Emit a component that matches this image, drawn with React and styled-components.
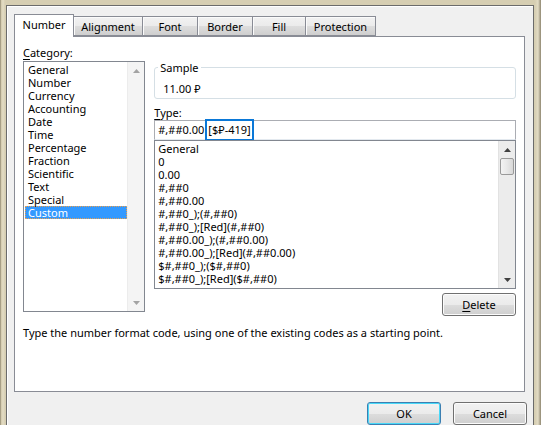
import React from "react";
import styled, { createGlobalStyle } from "styled-components";

const GlobalStyle = createGlobalStyle`
  html, body {
    margin: 0;
    padding: 0;
  }
  body {
    font-family: "Segoe UI", "Noto Sans", sans-serif;
    font-size: 11px;
    color: #000;
  }
`;

const Frame = styled.div`
  width: 541px;
  height: 425px;
  box-sizing: border-box;
  overflow: hidden;
  display: flex;
  padding: 5px 7px 0 6px;
  background: linear-gradient(
    90deg,
    #7d7560 0,
    #d2c9ab 1px,
    #e4ddc6 3px,
    #d6ceb2 5px,
    #d6ceb2 calc(100% - 6px),
    #e2dbc4 calc(100% - 3px),
    #8f8771 100%
  );
`;

const Dialog = styled.div`
  flex: 1;
  display: flex;
  flex-direction: column;
  background: #f0f0f0;
  border: 1px solid #6b6b6b;
  border-bottom: none;
  box-shadow: inset 1px 1px 0 #ffffff;
  padding: 8px 8px 0 7px;
`;

const TabStrip = styled.div`
  display: flex;
  align-items: flex-end;
  height: 22px;
`;

const Tab = styled.div`
  box-sizing: border-box;
  width: ${(p) => p.$w}px;
  height: ${(p) => (p.$active ? 23 : 20)}px;
  margin-bottom: ${(p) => (p.$active ? -1 : 0)}px;
  position: relative;
  z-index: ${(p) => (p.$active ? 2 : 1)};
  display: flex;
  align-items: center;
  justify-content: center;
  padding-bottom: ${(p) => (p.$active ? 3 : 0)}px;
  border: 1px solid #898c95;
  border-bottom: ${(p) => (p.$active ? "none" : "1px solid #898c95")};
  border-left: ${(p) => (p.$first || p.$active ? "1px solid #898c95" : "none")};
  background: ${(p) =>
    p.$active
      ? "#ffffff"
      : "linear-gradient(180deg, #f2f2f2 0%, #ebebeb 50%, #dddddd 51%, #cfcfcf 100%)"};
  box-shadow: ${(p) => (p.$active ? "none" : "inset 1px 1px 0 #fbfbfb")};
`;

const Panel = styled.div`
  box-sizing: border-box;
  width: 511px;
  height: 365px;
  background: #ffffff;
  border: 1px solid #898c95;
  padding: 8px 8px 0 8px;
  display: flex;
  flex-direction: column;
`;

const Columns = styled.div`
  display: flex;
  gap: 9px;
  align-items: flex-start;
`;

const LeftCol = styled.div`
  width: 123px;
  display: flex;
  flex-direction: column;
`;

const RightCol = styled.div`
  width: 364px;
  display: flex;
  flex-direction: column;
  margin-top: 15px;
`;

const Label = styled.div`
  line-height: 15px;
  height: 15px;
  margin-bottom: ${(p) => p.$mb || 0}px;
  margin-top: ${(p) => p.$mt || 0}px;
  u {
    text-decoration: underline;
    text-underline-offset: 2px;
  }
`;

const ListBox = styled.div`
  box-sizing: border-box;
  height: ${(p) => p.$h}px;
  flex-shrink: 0;
  border: 1px solid #828790;
  background: #ffffff;
  display: flex;
  overflow: hidden;
`;

const Items = styled.div`
  flex: 1;
  padding-top: ${(p) => p.$pt}px;
  padding-left: 1px;
  overflow: hidden;
`;

const Item = styled.div`
  height: 13px;
  line-height: 13px;
  padding-left: ${(p) => p.$pl}px;
  white-space: nowrap;
  box-sizing: border-box;
  background: ${(p) => (p.$selected ? "#3399ff" : "transparent")};
  color: ${(p) => (p.$selected ? "#ffffff" : "#000")};
  outline: ${(p) => (p.$selected ? "1px dotted #e8a050" : "none")};
  outline-offset: -1px;
`;

const ScrollBar = styled.div`
  width: 17px;
  display: flex;
  flex-direction: column;
  background: ${(p) => (p.$disabled ? "#f4f4f4" : "#ececec")};
  border-left: 1px solid ${(p) => (p.$disabled ? "#ececec" : "#e2e2e2")};
  box-sizing: border-box;
`;

const Arrow = styled.div`
  height: 17px;
  display: flex;
  align-items: center;
  justify-content: center;
  svg {
    display: block;
  }
`;

const Track = styled.div`
  flex: 1;
  padding: 0 1px;
`;

const Thumb = styled.div`
  height: 15px;
  border: 1px solid #9a9a9a;
  border-radius: 2px;
  background: linear-gradient(90deg, #f3f3f3 0%, #e8e8e8 50%, #d8d8d8 100%);
`;

const GroupBox = styled.fieldset`
  margin: 0;
  padding: 6px 6px 2px 8px;
  border: 1px solid #d5dfe5;
  border-radius: 3px;
  min-width: 0;
  legend {
    padding: 0 2px;
    margin-left: -5px;
    line-height: 15px;
  }
`;

const SampleText = styled.div`
  line-height: 15px;
  height: 15px;
`;

const TextInput = styled.div`
  box-sizing: border-box;
  height: 20px;
  border: 1px solid #abadb3;
  border-bottom-color: #e3e9ef;
  display: flex;
  align-items: stretch;
  padding-left: 3px;
  white-space: pre;
`;

const Plain = styled.span`
  line-height: 18px;
`;

const Selected = styled.span`
  margin: -2px 0 -2px 1px;
  border: 2px solid #0a78d7;
  padding: 0 1px;
  line-height: 18px;
`;

const ButtonRow = styled.div`
  display: flex;
  justify-content: flex-end;
  gap: 12px;
  margin-top: ${(p) => p.$mt || 0}px;
  margin-right: ${(p) => p.$mr || 0}px;
`;

const Button = styled.div`
  box-sizing: border-box;
  width: ${(p) => p.$w}px;
  height: 23px;
  display: flex;
  align-items: center;
  justify-content: center;
  border: 1px solid ${(p) => (p.$default ? "#3c7fb1" : "#707070")};
  border-radius: 3px;
  background: linear-gradient(180deg, #f2f2f2 0%, #ebebeb 50%, #dddddd 51%, #cfcfcf 100%);
  box-shadow: inset 0 0 0 1px ${(p) => (p.$default ? "#48d8f8" : "#fcfcfc")};
  u {
    text-decoration: underline;
    text-underline-offset: 2px;
  }
`;

const Description = styled.div`
  margin-top: 9px;
  line-height: 15px;
`;

const UpIcon = ({ color }) => (
  <svg width="7" height="4" viewBox="0 0 7 4">
    <path d="M3.5 0 L7 4 L0 4 Z" fill={color} />
  </svg>
);

const DownIcon = ({ color }) => (
  <svg width="7" height="4" viewBox="0 0 7 4">
    <path d="M0 0 L7 0 L3.5 4 Z" fill={color} />
  </svg>
);

const VScroll = ({ disabled }) => {
  const color = disabled ? "#a3a3a3" : "#404040";
  return (
    <ScrollBar $disabled={disabled}>
      <Arrow>
        <UpIcon color={color} />
      </Arrow>
      <Track>{!disabled && <Thumb />}</Track>
      <Arrow>
        <DownIcon color={color} />
      </Arrow>
    </ScrollBar>
  );
};

const tabs = [
  { label: "Number", w: 60, active: true },
  { label: "Alignment", w: 69 },
  { label: "Font", w: 55 },
  { label: "Border", w: 55 },
  { label: "Fill", w: 53 },
  { label: "Protection", w: 70 },
];

const categories = [
  "General",
  "Number",
  "Currency",
  "Accounting",
  "Date",
  "Time",
  "Percentage",
  "Fraction",
  "Scientific",
  "Text",
  "Special",
  "Custom",
];

const formats = [
  "General",
  "0",
  "0.00",
  "#,##0",
  "#,##0.00",
  "#,##0_);(#,##0)",
  "#,##0_);[Red](#,##0)",
  "#,##0.00_);(#,##0.00)",
  "#,##0.00_);[Red](#,##0.00)",
  "$#,##0_);($#,##0)",
  "$#,##0_);[Red]($#,##0)",
];

export default function App() {
  return (
    <>
      <GlobalStyle />
      <Frame>
        <Dialog>
          <TabStrip>
            {tabs.map((t, i) => (
              <Tab key={t.label} $w={t.w} $active={t.active} $first={i === 0}>
                {t.label}
              </Tab>
            ))}
          </TabStrip>
          <Panel>
            <Columns>
              <LeftCol>
                <Label $mb={1}>
                  <u>C</u>ategory:
                </Label>
                <ListBox $h={251}>
                  <Items $pt={1}>
                    {categories.map((c) => (
                      <Item key={c} $pl={3} $selected={c === "Custom"}>
                        {c}
                      </Item>
                    ))}
                  </Items>
                  <VScroll disabled />
                </ListBox>
              </LeftCol>
              <RightCol>
                <GroupBox>
                  <legend>Sample</legend>
                  <SampleText>11.00 ₽</SampleText>
                </GroupBox>
                <Label $mt={6}>
                  <u>T</u>ype:
                </Label>
                <TextInput>
                  <Plain>#,##0.00</Plain>
                  <Selected>[$₽-419]</Selected>
                </TextInput>
                <ListBox $h={149}>
                  <Items $pt={1}>
                    {formats.map((f) => (
                      <Item key={f} $pl={2}>
                        {f}
                      </Item>
                    ))}
                  </Items>
                  <VScroll />
                </ListBox>
                <ButtonRow $mt={4}>
                  <Button $w={74}>
                    <span>
                      <u>D</u>elete
                    </span>
                  </Button>
                </ButtonRow>
              </RightCol>
            </Columns>
            <Description>
              Type the number format code, using one of the existing codes as a
              starting point.
            </Description>
          </Panel>
          <ButtonRow $mt={10} $mr={-2}>
            <Button $w={74} $default>
              OK
            </Button>
            <Button $w={74}>Cancel</Button>
          </ButtonRow>
        </Dialog>
      </Frame>
    </>
  );
}
